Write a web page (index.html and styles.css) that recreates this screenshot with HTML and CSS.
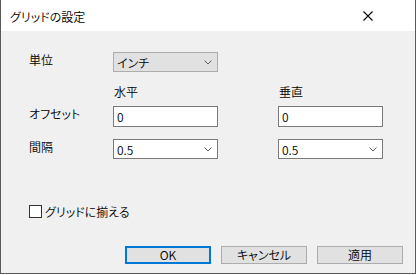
FILE: index.html
```html
<!DOCTYPE html>
<html lang="ja">
<head>
<meta charset="utf-8">
<title>グリッドの設定</title>
<link rel="stylesheet" href="styles.css">
</head>
<body>
<div class="window">
  <div class="titlebar">
    <span class="title">グリッドの設定</span>
    <span class="close">
      <svg width="10" height="10" viewBox="0 0 10 10"><path d="M0.5 0.5 L9.5 9.5 M9.5 0.5 L0.5 9.5" stroke="#000" stroke-width="1.1" fill="none"/></svg>
    </span>
  </div>
  <div class="content">
    <div class="form">
      <div class="label r1">単位</div>
      <div class="combo ro c1 r1"><span>インチ</span><svg class="chev" width="8" height="5" viewBox="0 0 8 5"><path d="M0.5 0.5 L4 4 L7.5 0.5" stroke="#606060" fill="none"/></svg></div>
      <div class="head c1 r2">水平</div>
      <div class="head c2 r2">垂直</div>
      <div class="label r3">オフセット</div>
      <div class="input c1 r3">0</div>
      <div class="input c2 r3">0</div>
      <div class="label r4">間隔</div>
      <div class="combo c1 r4"><span>0.5</span><svg class="chev" width="8" height="5" viewBox="0 0 8 5"><path d="M0.5 0.5 L4 4 L7.5 0.5" stroke="#606060" fill="none"/></svg></div>
      <div class="combo c2 r4"><span>0.5</span><svg class="chev" width="8" height="5" viewBox="0 0 8 5"><path d="M0.5 0.5 L4 4 L7.5 0.5" stroke="#606060" fill="none"/></svg></div>
    </div>
    <label class="check"><span class="box"></span><span>グリッドに揃える</span></label>
    <div class="buttons">
      <button class="btn default">OK</button>
      <button class="btn">キャンセル</button>
      <button class="btn">適用</button>
    </div>
  </div>
</div>
</body>
</html>
```
FILE: styles.css
```css
* { box-sizing: border-box; }
html, body { margin: 0; padding: 0; background: #ffffff; }
body {
  font-family: "Noto Sans CJK JP", "Noto Sans", sans-serif;
  font-size: 12px;
  font-weight: 350;
  font-feature-settings: "palt";
  color: #000;
}
.window {
  width: 416px;
  height: 274px;
  border: 1px solid #5a5a5a;
  border-top: none;
  display: flex;
  flex-direction: column;
}
.titlebar {
  height: 31px;
  background: #ffffff;
  display: flex;
  align-items: center;
  justify-content: space-between;
  padding-left: 9px;
  padding-right: 42px;
}
.title { font-size: 12px; line-height: 15px; margin-top: 1px; }
.close { display: flex; width: 10px; height: 10px; }
.content {
  flex: 1;
  background: #f0f0f0;
  padding: 21px 12px 0 27px;
  display: flex;
  flex-direction: column;
}
.form {
  display: grid;
  grid-template-columns: 85px 105px 60px 105px;
  grid-template-rows: 20px 34px 33px 20px;
}
.r1 { grid-row: 1; }
.r2 { grid-row: 2; }
.r3 { grid-row: 3; }
.r4 { grid-row: 4; }
.c1 { grid-column: 2; }
.c2 { grid-column: 4; }
.label { grid-column: 1; line-height: 15px; align-self: start; padding-left: 1px; }
.head { align-self: end; line-height: 15px; margin-bottom: 7px; padding-left: 1px; }
.combo, .input {
  height: 20px;
  display: flex;
  align-items: center;
  justify-content: space-between;
  padding: 0 5px 0 3px;
  line-height: 15px;
  align-self: start;
}
.input { height: 21px; background: #fff; border: 1px solid #7a7a7a; }
.combo { background: #fff; border: 1px solid #7a7a7a; }
.combo.ro { background: #e1e1e1; border-color: #adadad; }
.chev { display: block; margin-top: 1px; }
.check {
  display: flex;
  align-items: center;
  gap: 3px;
  margin-top: 45px;
  margin-left: 1px;
  line-height: 15px;
}
.box {
  width: 13px;
  height: 13px;
  border: 1px solid #333;
  background: #fff;
}
.buttons {
  display: flex;
  justify-content: flex-end;
  gap: 10px;
  margin-top: 27px;
}
.btn {
  width: 86px;
  height: 18px;
  background: #e1e1e1;
  border: 1px solid #adadad;
  font-family: inherit;
  font-size: 12px;
  font-weight: 350;
  font-feature-settings: "palt";
  line-height: 14px;
  color: #000;
  padding: 0;
  margin: 0;
}
.btn.default { border: 2px solid #0078d7; }
```
